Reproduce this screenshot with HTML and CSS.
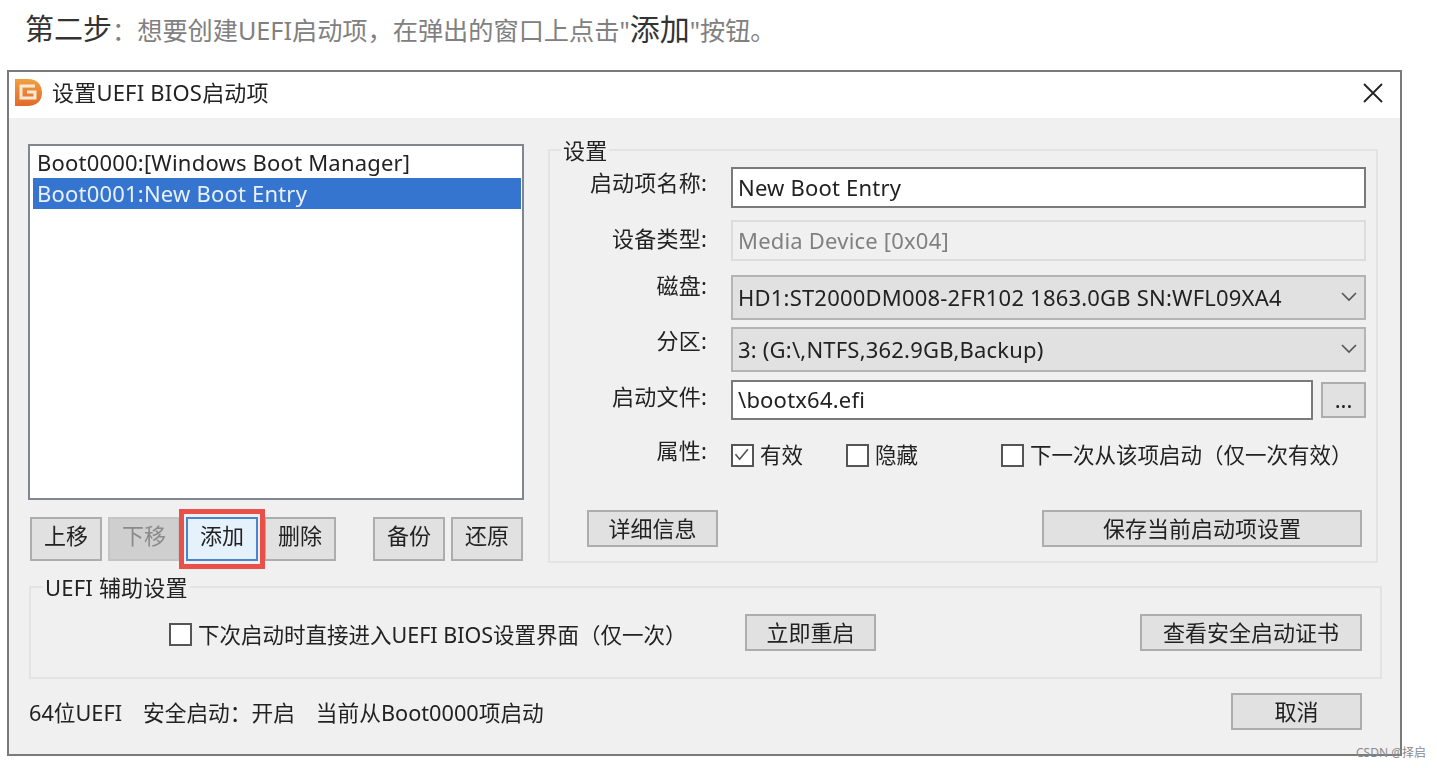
FILE: index.html
```html
<!DOCTYPE html>
<html lang="zh-CN">
<head>
  <meta charset="UTF-8">
  <title>设置UEFI BIOS启动项</title>
  <link rel="stylesheet" href="styles.css">
</head>
<body>
  <p class="step"><span class="dark">第二步</span>：想要创建UEFI启动项，在弹出的窗口上点击"<span class="dark big">添加</span>"按钮。</p>

  <div class="dialog">
    <div class="titlebar">
      <svg class="logo" width="28" height="29" viewBox="0 0 28 29">
        <defs>
          <linearGradient id="logo-fill" x1="0" y1="0" x2="0" y2="1">
            <stop offset="0" stop-color="#f0a040"/>
            <stop offset="1" stop-color="#e2682a"/>
          </linearGradient>
        </defs>
        <path d="M0 1H13C22 1 27 7 27 15C27 23 21 28 13 28H0Z" fill="url(#logo-fill)"/>
        <path d="M20 8H6V20H20V14H12" fill="none" stroke="#fde9d6" stroke-width="3"/>
      </svg>
      <span class="title">设置UEFI BIOS启动项</span>
      <svg class="close" width="20" height="20" viewBox="0 0 20 20">
        <path d="M1 1L19 19M19 1L1 19" stroke="#222" stroke-width="1.8"/>
      </svg>
    </div>

    <div class="content">
      <div class="top">
        <div class="left">
          <ul class="list">
            <li>Boot0000:[Windows Boot Manager]</li>
            <li class="selected">Boot0001:New Boot Entry</li>
          </ul>
          <div class="list-btns">
            <button class="btn small">上移</button>
            <button class="btn small disabled">下移</button>
            <span class="highlight"><button class="btn small focused">添加</button></span>
            <button class="btn small">删除</button>
            <button class="btn small push">备份</button>
            <button class="btn small">还原</button>
          </div>
        </div>

        <fieldset class="group settings">
          <legend>设置</legend>
          <div class="row row-name">
            <label>启动项名称:</label>
            <div class="field">New Boot Entry</div>
          </div>
          <div class="row row-type">
            <label>设备类型:</label>
            <div class="field readonly">Media Device [0x04]</div>
          </div>
          <div class="row row-disk">
            <label>磁盘:</label>
            <div class="field select">
              HD1:ST2000DM008-2FR102 1863.0GB SN:WFL09XA4
              <svg width="16" height="10" viewBox="0 0 16 10"><path d="M1 1L8 8L15 1" fill="none" stroke="#555" stroke-width="1.6"/></svg>
            </div>
          </div>
          <div class="row row-part">
            <label>分区:</label>
            <div class="field select">
              3: (G:\,NTFS,362.9GB,Backup)
              <svg width="16" height="10" viewBox="0 0 16 10"><path d="M1 1L8 8L15 1" fill="none" stroke="#555" stroke-width="1.6"/></svg>
            </div>
          </div>
          <div class="row row-file">
            <label>启动文件:</label>
            <div class="field">\bootx64.efi</div>
            <button class="btn browse">...</button>
          </div>
          <div class="row row-attr">
            <label>属性:</label>
            <span class="check attr-valid">
              <svg class="box" width="23" height="23" viewBox="0 0 23 23"><path d="M3 10L8 16L18 4" fill="none" stroke="#555" stroke-width="2"/></svg>有效
            </span>
            <span class="check attr-hide"><span class="box"></span>隐藏</span>
            <span class="check"><span class="box"></span>下一次从该项启动（仅一次有效）</span>
          </div>
          <div class="row row-actions">
            <button class="btn details">详细信息</button>
            <button class="btn save">保存当前启动项设置</button>
          </div>
        </fieldset>
      </div>

      <fieldset class="group uefi">
        <legend>UEFI 辅助设置</legend>
        <div class="uefi-row">
          <span class="check uefi-check"><span class="box"></span>下次启动时直接进入UEFI BIOS设置界面（仅一次）</span>
          <button class="btn reboot">立即重启</button>
          <button class="btn certs">查看安全启动证书</button>
        </div>
      </fieldset>

      <div class="footer">
        <span class="status">64位UEFI</span>
        <span class="status">安全启动：开启</span>
        <span class="status">当前从Boot0000项启动</span>
        <button class="btn cancel">取消</button>
      </div>
    </div>
  </div>

  <div class="watermark">CSDN @择启</div>
</body>
</html>
```

FILE: styles.css
```css
body {
  margin: 0;
  background-color: #fff;
  font-family: "Noto Sans", "Noto Sans CJK SC", sans-serif;
  overflow: hidden;
}

.step {
  margin: 0;
  height: 70px;
  padding: 10px 0 0 25px;
  box-sizing: border-box;
  font-size: 25.2px;
  line-height: 38px;
  color: #808080;
}

.dark {
  color: #333;
  font-size: 29px;
}

.big {
  font-size: 30px;
}

.dialog {
  width: 1395px;
  height: 686px;
  margin-left: 7px;
  box-sizing: border-box;
  border: 2px solid #7a7a7a;
  background-color: #f0f0f0;
  color: #222;
  font-size: 22px;
  letter-spacing: 0.2px;
  filter: blur(0.45px);
}

.titlebar {
  height: 46px;
  box-sizing: border-box;
  background-color: #fff;
  display: flex;
  align-items: center;
  padding: 0 17px 5px 6px;
}

.title {
  margin: 0 0 4px 9px;
  flex: 1;
}

.content {
  padding: 17px 18px 0 19px;
}

.top {
  display: flex;
  gap: 24px;
}

.left {
  width: 496px;
  padding-top: 9px;
}

.list {
  list-style: none;
  margin: 0;
  height: 356px;
  padding: 1px 1px 0 3px;
  box-sizing: border-box;
  border: 2px solid #82878f;
  background-color: #fff;
  line-height: 31px;
}

.list li {
  padding-left: 4px;
  height: 31px;
}

.list .selected {
  background-color: #3575d0;
  color: #e8f0fb;
}

.list-btns {
  display: flex;
  margin-top: 17px;
  gap: 6px;
  padding-left: 2px;
}

.btn {
  font: inherit;
  letter-spacing: 0;
  color: #222;
  background-color: #e1e1e1;
  border: 2px solid #adadad;
  padding: 0 0 2px;
  height: 37px;
  line-height: 1;
}

.btn.small {
  width: 72px;
  height: 44px;
  padding-bottom: 8px;
}

.btn.disabled {
  background-color: #cfcfcf;
  color: #8a8a8a;
  border-color: #c4c4c4;
}

.btn.focused {
  background-color: #e5f1fb;
  border-color: #4a86d0;
  display: block;
}

.highlight {
  border: 5px solid #e8504a;
  margin: -8px -7px;
  padding: 3px 2px;
  position: relative;
}

.btn.push {
  margin-left: 31px;
}

.group {
  border: 2px solid #e3e3e3;
  margin: 0;
  padding: 0;
  min-width: 0;
}

.group legend {
  padding: 0 2px;
  line-height: 26px;
}

.settings {
  width: 830px;
  height: 426px;
  margin-top: 2px;
  box-sizing: border-box;
  padding: 4px 10px 0 38px;
}

.settings legend {
  margin-left: -27px;
}

.row {
  display: flex;
  align-items: center;
}

.row label {
  width: 119px;
  margin-right: 24px;
  line-height: 24px;
  text-align: right;
  white-space: nowrap;
  flex: none;
}

.row-name label {
  margin-bottom: 11px;
}

.row-type label {
  margin-bottom: 5px;
}

.row-disk label,
.row-part label,
.row-attr label {
  align-self: flex-start;
}

.row-disk label {
  margin-top: -2px;
}

.row-part label {
  margin-top: 1px;
}

.row-attr label {
  margin-top: -6px;
}

.row-file label {
  margin-bottom: 8px;
}

.field {
  flex: 1;
  height: 100%;
  box-sizing: border-box;
  border: 2px solid #7a7a7a;
  background-color: #fff;
  padding: 0 0 2px 5px;
  display: flex;
  align-items: center;
}

.row-name {
  height: 41px;
}

.row-type {
  height: 41px;
  margin-top: 12px;
}

.field.readonly {
  background-color: #f0f0f0;
  border-color: #dcdcdc;
  color: #808080;
}

.row-disk {
  height: 45px;
  margin-top: 14px;
}

.row-part {
  height: 45px;
  margin-top: 7px;
}

.field.select {
  background-color: #e1e1e1;
  border-color: #b4b4b4;
  justify-content: space-between;
  padding-right: 7px;
}

.row-file {
  height: 40px;
  margin-top: 8px;
}

.browse {
  width: 45px;
  height: 36px;
  margin-left: 8px;
}

.row-attr {
  height: 23px;
  margin-top: 24px;
}

.check {
  display: inline-flex;
  align-items: center;
  gap: 6px;
  font-size: 21.5px;
  letter-spacing: 0;
}

.row-attr .check {
  margin-top: -4px;
}

.row-attr .box {
  margin-top: 4px;
}

.box {
  display: block;
  width: 23px;
  height: 23px;
  box-sizing: border-box;
  border: 2px solid #555;
  background-color: #fff;
  flex: none;
}

.attr-valid {
  margin-right: 43px;
}

.attr-hide {
  margin-right: 83px;
}

.row-actions {
  margin: 43px 4px 0 -1px;
  height: 37px;
  justify-content: space-between;
}

.details {
  width: 131px;
}

.save {
  width: 320px;
}

.uefi {
  margin: 11px 0 0 1px;
  height: 105px;
  padding: 0 18px 0 138px;
  box-sizing: border-box;
}

.uefi legend {
  margin-left: -126px;
}

.uefi-row {
  display: flex;
  align-items: center;
  margin-top: 14px;
}

.uefi-check {
  width: 576px;
  margin-top: 2px;
  white-space: nowrap;
}

.uefi-check .box {
  margin-top: 2px;
}

.reboot {
  width: 131px;
}

.certs {
  width: 222px;
  margin-left: auto;
}

.footer {
  display: flex;
  align-items: center;
  height: 37px;
  margin-top: 14px;
  padding-right: 20px;
  padding-left: 1px;
  gap: 21px;
}

.status {
  font-size: 21.7px;
  letter-spacing: 0;
}

.cancel {
  width: 131px;
  margin-left: auto;
}

.watermark {
  position: absolute;
  left: 1356px;
  top: 745px;
  font-size: 12px;
  line-height: 15px;
  color: #8a8a8a;
}
```
